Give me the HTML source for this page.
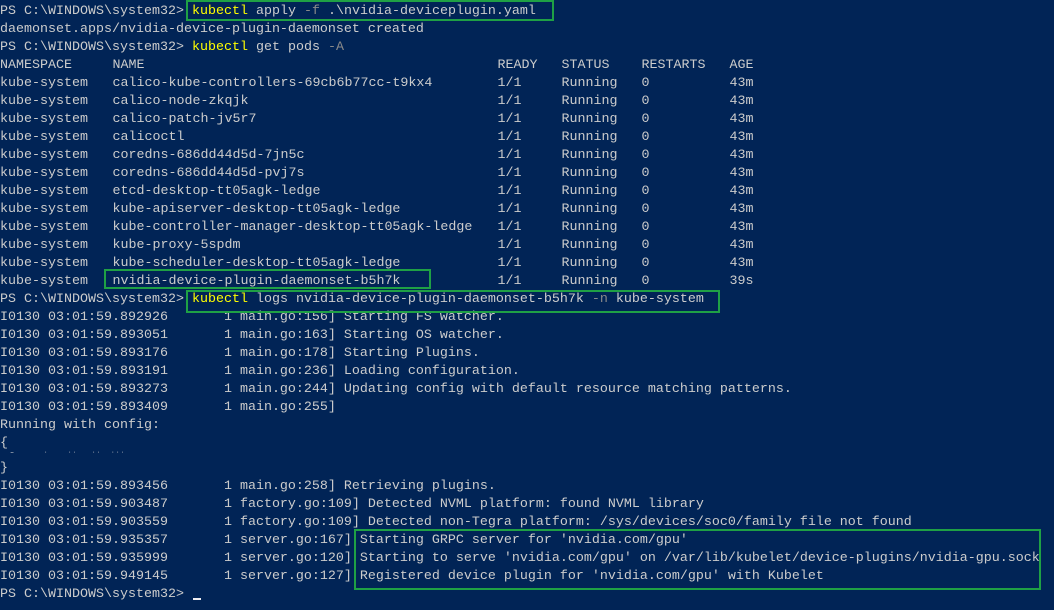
<!DOCTYPE html>
<html><head><meta charset="utf-8"><style>
html,body{margin:0;padding:0;background:#012456;width:1054px;height:610px;overflow:hidden}
#t{position:absolute;left:0;top:3px;font-family:"Liberation Mono",monospace;font-size:13.33px;line-height:18px;color:#cccccc;white-space:pre}
.y{color:#ffff00}.g{color:#8a8a8a}
.box{position:absolute;border:2px solid #1fa045;box-sizing:border-box}
.gar{height:7px;line-height:7px;font-size:8px}
.cur{position:absolute;left:193px;top:598px;width:8px;height:2px;background:#eeedf0}
.r span{display:inline-block}
.a{width:112.5px}.b{width:385px}.c{width:64px}.d{width:80px}.e{width:88px}
</style></head><body>
<div id="t"><div>PS C:\WINDOWS\system32&gt; <span class="y">kubectl</span> apply <span class="g">-f</span> .\nvidia-deviceplugin.yaml</div><div>daemonset.apps/nvidia-device-plugin-daemonset created</div><div>PS C:\WINDOWS\system32&gt; <span class="y">kubectl</span> get pods <span class="g">-A</span></div><div class="r"><span class="a">NAMESPACE</span><span class="b">NAME</span><span class="c">READY</span><span class="d">STATUS</span><span class="e">RESTARTS</span><span>AGE</span></div><div class="r"><span class="a">kube-system</span><span class="b">calico-kube-controllers-69cb6b77cc-t9kx4</span><span class="c">1/1</span><span class="d">Running</span><span class="e">0</span><span>43m</span></div><div class="r"><span class="a">kube-system</span><span class="b">calico-node-zkqjk</span><span class="c">1/1</span><span class="d">Running</span><span class="e">0</span><span>43m</span></div><div class="r"><span class="a">kube-system</span><span class="b">calico-patch-jv5r7</span><span class="c">1/1</span><span class="d">Running</span><span class="e">0</span><span>43m</span></div><div class="r"><span class="a">kube-system</span><span class="b">calicoctl</span><span class="c">1/1</span><span class="d">Running</span><span class="e">0</span><span>43m</span></div><div class="r"><span class="a">kube-system</span><span class="b">coredns-686dd44d5d-7jn5c</span><span class="c">1/1</span><span class="d">Running</span><span class="e">0</span><span>43m</span></div><div class="r"><span class="a">kube-system</span><span class="b">coredns-686dd44d5d-pvj7s</span><span class="c">1/1</span><span class="d">Running</span><span class="e">0</span><span>43m</span></div><div class="r"><span class="a">kube-system</span><span class="b">etcd-desktop-tt05agk-ledge</span><span class="c">1/1</span><span class="d">Running</span><span class="e">0</span><span>43m</span></div><div class="r"><span class="a">kube-system</span><span class="b">kube-apiserver-desktop-tt05agk-ledge</span><span class="c">1/1</span><span class="d">Running</span><span class="e">0</span><span>43m</span></div><div class="r"><span class="a">kube-system</span><span class="b">kube-controller-manager-desktop-tt05agk-ledge</span><span class="c">1/1</span><span class="d">Running</span><span class="e">0</span><span>43m</span></div><div class="r"><span class="a">kube-system</span><span class="b">kube-proxy-5spdm</span><span class="c">1/1</span><span class="d">Running</span><span class="e">0</span><span>43m</span></div><div class="r"><span class="a">kube-system</span><span class="b">kube-scheduler-desktop-tt05agk-ledge</span><span class="c">1/1</span><span class="d">Running</span><span class="e">0</span><span>43m</span></div><div class="r"><span class="a">kube-system</span><span class="b">nvidia-device-plugin-daemonset-b5h7k</span><span class="c">1/1</span><span class="d">Running</span><span class="e">0</span><span>39s</span></div><div>PS C:\WINDOWS\system32&gt; <span class="y">kubectl</span> logs nvidia-device-plugin-daemonset-b5h7k <span class="g">-n</span> kube-system</div><div>I0130 03:01:59.892926       1 main.go:156] Starting FS watcher.</div><div>I0130 03:01:59.893051       1 main.go:163] Starting OS watcher.</div><div>I0130 03:01:59.893176       1 main.go:178] Starting Plugins.</div><div>I0130 03:01:59.893191       1 main.go:236] Loading configuration.</div><div>I0130 03:01:59.893273       1 main.go:244] Updating config with default resource matching patterns.</div><div>I0130 03:01:59.893409       1 main.go:255]</div><div>Running with config:</div><div>{</div><div class="gar">  ˜      ˙    ˙˙   ˙˙  ˙˙˙</div><div>}</div><div>I0130 03:01:59.893456       1 main.go:258] Retrieving plugins.</div><div>I0130 03:01:59.903487       1 factory.go:109] Detected NVML platform: found NVML library</div><div>I0130 03:01:59.903559       1 factory.go:109] Detected non-Tegra platform: /sys/devices/soc0/family file not found</div><div>I0130 03:01:59.935357       1 server.go:167] Starting GRPC server for 'nvidia.com/gpu'</div><div>I0130 03:01:59.935999       1 server.go:120] Starting to serve 'nvidia.com/gpu' on /var/lib/kubelet/device-plugins/nvidia-gpu.sock</div><div>I0130 03:01:59.949145       1 server.go:127] Registered device plugin for 'nvidia.com/gpu' with Kubelet</div><div>PS C:\WINDOWS\system32&gt; </div></div>
<div class="box" style="left:186px;top:0px;width:368px;height:21px"></div>
<div class="box" style="left:104px;top:269px;width:327px;height:20px"></div>
<div class="box" style="left:186px;top:290px;width:534px;height:23px"></div>
<div class="box" style="left:354px;top:529px;width:687px;height:61px"></div>
<div class="cur"></div>
</body></html>
